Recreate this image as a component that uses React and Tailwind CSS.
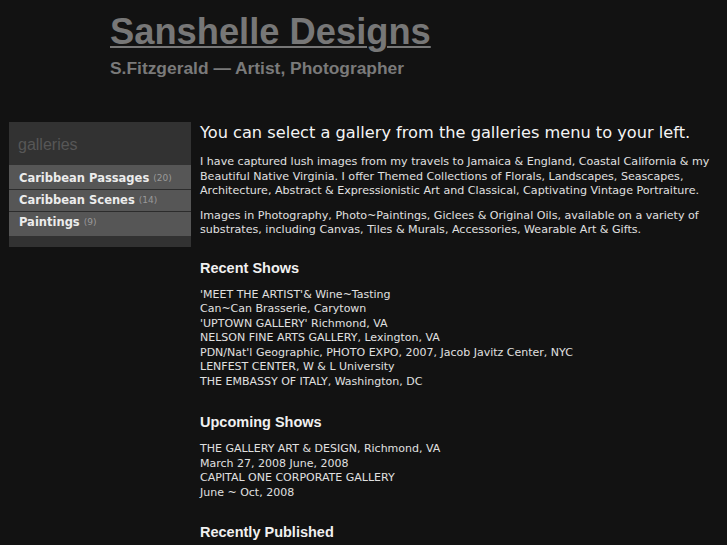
const galleries = [
  { name: "Caribbean Passages", count: 20 },
  { name: "Caribbean Scenes", count: 14 },
  { name: "Paintings", count: 9 },
];

const recentShows = [
  "'MEET THE ARTIST'& Wine~Tasting",
  "Can~Can Brasserie, Carytown",
  "'UPTOWN GALLERY' Richmond, VA",
  "NELSON FINE ARTS GALLERY, Lexington, VA",
  "PDN/Nat'l Geographic, PHOTO EXPO, 2007, Jacob Javitz Center, NYC",
  "LENFEST CENTER, W & L University",
  "THE EMBASSY OF ITALY, Washington, DC",
];

const upcomingShows = [
  "THE GALLERY ART & DESIGN, Richmond, VA",
  "March 27, 2008 June, 2008",
  "CAPITAL ONE CORPORATE GALLERY",
  "June ~ Oct, 2008",
];

const sans = "font-['Liberation_Sans',Arial,sans-serif]";

export default function App() {
  return (
    <div className="min-h-screen bg-[#121212] font-['DejaVu_Sans',Verdana,sans-serif] text-[#e0e0e0]">
      {/* Header */}
      <header className={`${sans} pl-[110px] pt-[11px]`}>
        <h1 className="text-[36.3px] leading-[41px] font-bold text-[#777] underline underline-offset-[2px] decoration-2">
          Sanshelle Designs
        </h1>
        <p className="mt-[6px] text-[17.4px] leading-[20px] font-bold text-[#7a7a7a]">
          S.Fitzgerald — Artist, Photographer
        </p>
      </header>

      <div className="flex mt-[44px]">
        {/* Sidebar */}
        <aside className="ml-[9px] w-[182px] shrink-0 self-start bg-[#323232] pb-[11px]">
          <h2 className={`${sans} pt-[2px] text-[16px] leading-[41px] pl-[9px] text-[#575757]`}>
            galleries
          </h2>
          <ul className="bg-[#565656] pt-[3px] pb-[2px]">
            {galleries.map((g, i) => (
              <li
                key={g.name}
                className={`h-[22px] flex items-center pl-[10px] ${
                  i < galleries.length - 1 ? "border-b border-[#2c2c2c]" : ""
                }`}
              >
                <span className="text-[11.5px] font-bold text-[#ececec]">{g.name}</span>
                <span className="ml-[4px] text-[9px] text-[#9a9a9a]">({g.count})</span>
              </li>
            ))}
          </ul>
        </aside>

        {/* Main content */}
        <main className="ml-[9px] pr-[8px] flex-1 text-[11px] leading-[14.5px]">
          <h2 className="text-[16.2px] leading-[22px] text-[#f4f4f4] mb-[11px]">
            You can select a gallery from the galleries menu to your left.
          </h2>
          <p className="mb-[10px] text-[11.1px]">
            I have captured lush images from my travels to Jamaica &amp; England, Coastal
            California &amp; my Beautiful Native Virginia. I offer Themed Collections of
            Florals, Landscapes, Seascapes, Architecture, Abstract &amp; Expressionistic Art
            and Classical, Captivating Vintage Portraiture.
          </p>
          <p className="text-[11.1px]">
            Images in Photography, Photo~Paintings, Giclees &amp; Original Oils, available on
            a variety of substrates, including Canvas, Tiles &amp; Murals, Accessories,
            Wearable Art &amp; Gifts.
          </p>

          <h3 className={`${sans} mt-[21px] mb-[11px] text-[14.5px] leading-[18px] font-bold text-[#f0f0f0]`}>
            Recent Shows
          </h3>
          <div>
            {recentShows.map((s) => (
              <div key={s}>{s}</div>
            ))}
          </div>

          <h3 className={`${sans} mt-[24px] mb-[11px] text-[14.5px] leading-[18px] font-bold text-[#f0f0f0]`}>
            Upcoming Shows
          </h3>
          <div>
            {upcomingShows.map((s) => (
              <div key={s}>{s}</div>
            ))}
          </div>

          <h3 className={`${sans} mt-[23px] text-[14.5px] leading-[18px] font-bold text-[#f0f0f0]`}>
            Recently Published
          </h3>
        </main>
      </div>
    </div>
  );
}
